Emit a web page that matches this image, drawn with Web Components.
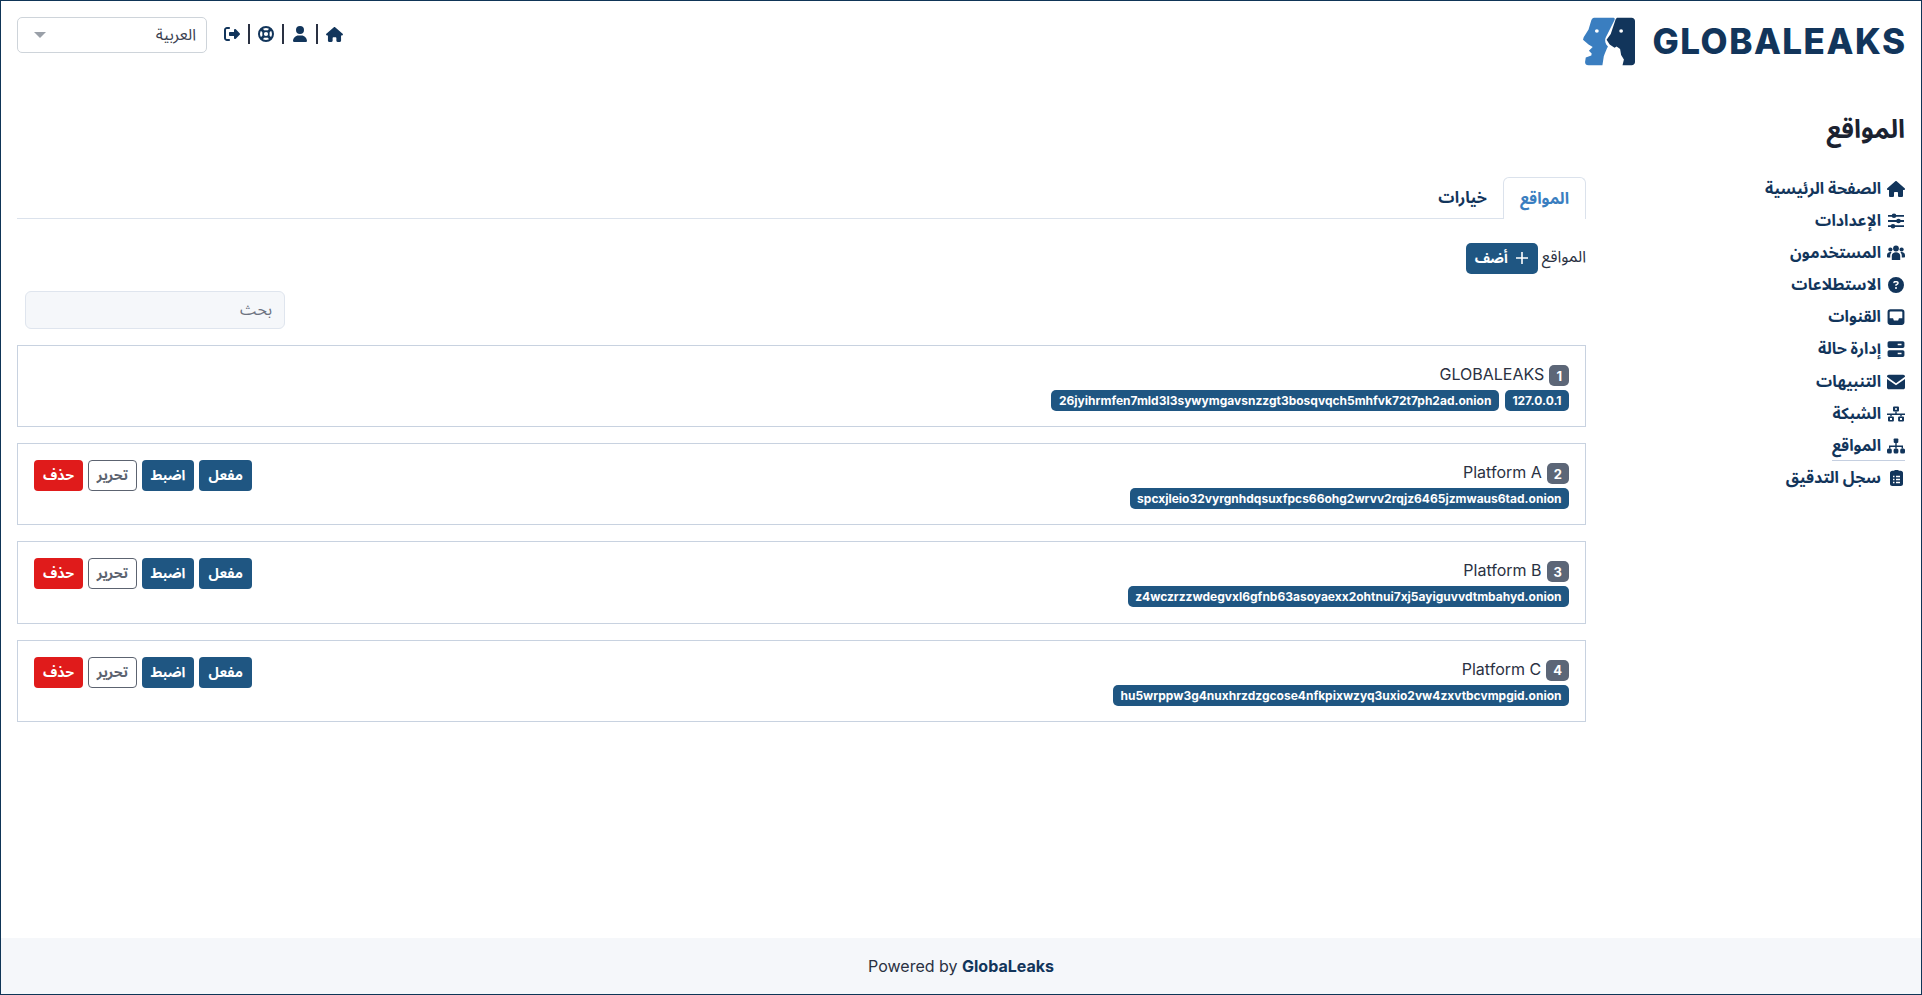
<!DOCTYPE html>
<html lang="ar" dir="rtl">
<head>
<meta charset="utf-8">
<title>GlobaLeaks</title>
<style>
html, body { margin: 0; height: 100%; overflow: hidden; background: #fff; }
body { font-family: Inter, "Noto Sans Arabic", "Noto Sans", sans-serif; color: #212529; font-size: 16px; }
</style>
</head>
<body>
<gl-app>
  <gl-topbar slot="top"></gl-topbar>
  <gl-sidebar slot="side">
    <gl-nav-item icon="house">الصفحة الرئيسية</gl-nav-item>
    <gl-nav-item icon="sliders">الإعدادات</gl-nav-item>
    <gl-nav-item icon="users">المستخدمون</gl-nav-item>
    <gl-nav-item icon="question">الاستطلاعات</gl-nav-item>
    <gl-nav-item icon="inbox">القنوات</gl-nav-item>
    <gl-nav-item icon="server">إدارة حالة</gl-nav-item>
    <gl-nav-item icon="envelope">التنبيهات</gl-nav-item>
    <gl-nav-item icon="network">الشبكة</gl-nav-item>
    <gl-nav-item icon="sitemap" active>المواقع</gl-nav-item>
    <gl-nav-item icon="clipboard">سجل التدقيق</gl-nav-item>
  </gl-sidebar>
  <gl-sites slot="main">
    <gl-site-card num="1" name="GLOBALEAKS" pills="127.0.0.1,26jyihrmfen7mld3l3sywymgavsnzzgt3bosqvqch5mhfvk72t7ph2ad.onion"></gl-site-card>
    <gl-site-card num="2" name="Platform A" pills="spcxjleio32vyrgnhdqsuxfpcs66ohg2wrvv2rqjz6465jzmwaus6tad.onion" actions></gl-site-card>
    <gl-site-card num="3" name="Platform B" pills="z4wczrzzwdegvxl6gfnb63asoyaexx2ohtnui7xj5ayiguvvdtmbahyd.onion" actions></gl-site-card>
    <gl-site-card num="4" name="Platform C" pills="hu5wrppw3g4nuxhrzdzgcose4nfkpixwzyq3uxio2vw4zxvtbcvmpgid.onion" actions></gl-site-card>
  </gl-sites>
  <gl-footer slot="foot"></gl-footer>
</gl-app>

<script>
const ICONS = {
  house: '<svg viewBox="0 0 576 512"><path d="M575.8 255.5c0 18-15 32.1-32 32.1h-32l.7 160.2c0 2.7-.2 5.4-.5 8.1V472c0 22.1-17.9 40-40 40H456c-1.1 0-2.2 0-3.3-.1c-1.4 .1-2.8 .1-4.2 .1H392c-22.1 0-40-17.9-40-40V384c0-17.7-14.3-32-32-32H256c-17.7 0-32 14.3-32 32v88c0 22.1-17.9 40-40 40H128.1c-1.5 0-3-.1-4.5-.2c-1.2 .1-2.4 .2-3.6 .2H104c-22.1 0-40-17.9-40-40V360c0-.9 0-1.9 .1-2.8V287.6H32c-18 0-32-14-32-32.1c0-9 3-17 10-24L266.4 8c7-7 15-8 22-8s15 2 21 7L564.8 231.5c8 7 12 15 11 24z"/></svg>',
  user: '<svg viewBox="0 0 448 512"><path d="M224 256A128 128 0 1 0 224 0a128 128 0 1 0 0 256zm-45.7 48C79.8 304 0 383.8 0 482.3C0 498.7 13.3 512 29.7 512H418.3c16.4 0 29.7-13.3 29.7-29.7C448 383.8 368.2 304 269.7 304H178.3z"/></svg>',
  logout: '<svg viewBox="0 0 512 512"><path d="M377.9 105.9L500.7 228.7c7.2 7.2 11.3 17.1 11.3 27.3s-4.1 20.1-11.3 27.3L377.9 406.1c-6.4 6.4-15 9.9-24 9.9c-18.7 0-33.9-15.2-33.9-33.9l0-62.1-128 0c-17.7 0-32-14.3-32-32l0-64c0-17.7 14.3-32 32-32l128 0 0-62.1c0-18.7 15.2-33.9 33.9-33.9c9 0 17.6 3.6 24 9.9zM160 96L96 96c-17.7 0-32 14.3-32 32l0 256c0 17.7 14.3 32 32 32l64 0c17.7 0 32 14.3 32 32s-14.3 32-32 32l-64 0c-53 0-96-43-96-96L0 128C0 75 43 32 96 32l64 0c17.7 0 32 14.3 32 32s-14.3 32-32 32z"/></svg>',
  lifering: '<svg viewBox="0 0 16 16"><circle cx="8" cy="8" r="7" fill="none" stroke="currentColor" stroke-width="2"/><circle cx="8" cy="8" r="2.900" fill="none" stroke="currentColor" stroke-width="1.600"/><path d="M3 3l2.800 2.800M13 3l-2.800 2.800M3 13l2.800-2.800M13 13l-2.800-2.800" stroke="currentColor" stroke-width="2.800"/></svg>',
  sliders: '<svg viewBox="0 0 16 16"><path d="M0 2.800h16M0 8h16M0 13.200h16" stroke="currentColor" stroke-width="1.800"/><circle cx="6" cy="2.800" r="2.300"/><circle cx="10.500" cy="8" r="2.300"/><circle cx="5" cy="13.200" r="2.300"/></svg>',
  users: '<svg viewBox="0 0 18 15"><circle cx="9" cy="3" r="2.900"/><circle cx="3.400" cy="4" r="2.100"/><circle cx="14.600" cy="4" r="2.100"/><path d="M4.800 14.500V10.500C4.800 8 6.600 6.800 9 6.800s4.200 1.200 4.200 3.700v4zM3.400 6.600c.5 0 .9.100 1.200.2C3.700 7.700 3.200 9 3.200 10.500V12H.8C.3 12 0 11.700 0 11.200V9.700C0 7.900 1.500 6.600 3.400 6.600zM14.600 6.600c-.5 0-.9.100-1.200.2.900.9 1.400 2.200 1.400 3.700V12h2.400c.5 0 .8-.3.8-.8V9.700c0-1.800-1.500-3.100-3.400-3.100z"/></svg>',
  question: '<svg viewBox="0 0 512 512"><path d="M256 512A256 256 0 1 0 256 0a256 256 0 1 0 0 512zM169.800 165.300c7.900-22.300 29.100-37.300 52.800-37.300h58.300c34.900 0 63.100 28.300 63.100 63.100c0 22.600-12.100 43.500-31.700 54.800L280 264.400c-.2 13-10.900 23.600-24 23.600c-13.300 0-24-10.700-24-24V250.500c0-8.600 4.600-16.500 12.100-20.800l44.300-25.400c4.700-2.700 7.600-7.700 7.600-13.100c0-8.400-6.800-15.100-15.100-15.100H222.600c-3.400 0-6.400 2.100-7.500 5.300l-.4 1.200c-4.400 12.500-18.200 19-30.600 14.600s-19-18.200-14.600-30.600l.4-1.200zM224 352a32 32 0 1 1 64 0 32 32 0 1 1 -64 0z"/></svg>',
  inbox: '<svg viewBox="0 0 16 14"><path fill-rule="evenodd" d="M3 0h10a2.500 2.500 0 0 1 2.500 2.500v9A2.500 2.500 0 0 1 13 14H3A2.500 2.500 0 0 1 .5 11.500v-9A2.500 2.500 0 0 1 3 0zM3 2a.6.6 0 0 0-.6.6V8h3l.7 2h3.800l.7-2h3V2.600A.6.6 0 0 0 13 2z"/></svg>',
  server: '<svg viewBox="0 0 16 14"><path fill-rule="evenodd" d="M2 0h12a1.500 1.500 0 0 1 1.500 1.500v3A1.500 1.500 0 0 1 14 6H2A1.500 1.500 0 0 1 .5 4.500v-3A1.500 1.500 0 0 1 2 0zM2 8h12a1.500 1.500 0 0 1 1.500 1.500v3A1.500 1.500 0 0 1 14 14H2a1.500 1.500 0 0 1-1.500-1.500v-3A1.500 1.500 0 0 1 2 8zM9.500 2.400v1.200h3.400V2.400zM9.500 10.400v1.200h3.400v-1.200z"/></svg>',
  envelope: '<svg viewBox="0 0 16 13"><path d="M1.600 0h12.800C15.300 0 16 .7 16 1.600v.3L8 7.500 0 1.900v-.3C0 .7.700 0 1.600 0zM0 3.800l8 5.600 8-5.600v7.600c0 .9-.7 1.600-1.600 1.600H1.600C.7 13 0 12.300 0 11.400z"/></svg>',
  network: '<svg viewBox="0 0 18 15"><path fill-rule="evenodd" d="M7 0h4a1 1 0 0 1 1 1v3a1 1 0 0 1-1 1H7a1 1 0 0 1-1-1V1a1 1 0 0 1 1-1zM8 1.700v1.600h2V1.700z"/><path d="M0 7h18v1.400H0zM8.300 5h1.400v3H8.300zM3.300 8h1.400v2H3.300zM13.300 8h1.400v2h-1.400z"/><path fill-rule="evenodd" d="M2 10h3.900a1 1 0 0 1 1 1v3a1 1 0 0 1-1 1H2a1 1 0 0 1-1-1v-3a1 1 0 0 1 1-1zM3 11.600v1.800h2v-1.800zM12.100 10H16a1 1 0 0 1 1 1v3a1 1 0 0 1-1 1h-3.900a1 1 0 0 1-1-1v-3a1 1 0 0 1 1-1zM13 11.600v1.800h2v-1.800z"/></svg>',
  sitemap: '<svg viewBox="0 0 18 15"><rect x="6.700" y="0" width="4.600" height="4.400" rx=".8"/><path d="M8.300 4h1.400v3H16v3h-1.400V8.400H9.700V10H8.300V8.400H3.400V10H2V7h6.300z"/><rect x="0" y="10" width="4.800" height="5" rx="1.600"/><rect x="6.600" y="10" width="4.800" height="5" rx="1.600"/><rect x="13.200" y="10" width="4.800" height="5" rx="1.600"/></svg>',
  clipboard: '<svg viewBox="0 0 13 16"><path fill-rule="evenodd" d="M4 .8C4.300.3 4.800 0 5.300 0h2.400c.5 0 1 .3 1.300.8h1.700c1.300 0 2.300 1 2.300 2.200v10.700c0 1.300-1 2.300-2.300 2.300H2.300C1 16 0 15 0 13.700V3C0 1.800 1 .8 2.300.8zM3 5.800v1.400h1.500V5.800zM6 5.800v1.400h4V5.800zM3 8.800v1.400h1.500V8.800zM6 8.800v1.400h4V8.800zM3 11.800v1.400h1.500v-1.400zM6 11.800v1.400h4v-1.400z"/></svg>'
};

class GlApp extends HTMLElement {
  constructor() {
    super();
    this.attachShadow({ mode: 'open' }).innerHTML = `
      <style>
        :host { display: flex; flex-direction: column; height: 100vh; box-sizing: border-box; border: 1px solid #0f3557; }
        .top { flex: none; }
        .body { flex: 1; display: flex; min-height: 0; padding: 0 16px; }
        .side { flex: none; width: 319px; }
        .main { flex: 1; min-width: 0; }
        .foot { flex: none; }
      </style>
      <div class="top"><slot name="top"></slot></div>
      <div class="body">
        <div class="side"><slot name="side"></slot></div>
        <div class="main"><slot name="main"></slot></div>
      </div>
      <div class="foot"><slot name="foot"></slot></div>`;
  }
}

class GlTopbar extends HTMLElement {
  constructor() {
    super();
    this.attachShadow({ mode: 'open' }).innerHTML = `
      <style>
        :host { display: flex; justify-content: space-between; align-items: flex-start; padding: 16px 16px 0; height: 94px; box-sizing: border-box; }
        .logo { display: flex; align-items: center; gap: 17px; direction: ltr; height: 49px; }
        .logo svg { width: 52px; height: 49px; display: block; }
        .word { font: 800 35px/49px Inter, sans-serif; color: #12355b; letter-spacing: 1.500px; margin-right: -1.500px; }
        .tools { display: flex; align-items: flex-start; gap: 9px; }
        .links { display: flex; height: 20px; margin-top: 7px; color: #12355b; }
        .links a { width: 32px; height: 20px; border-left: 2px solid #2a3142; display: flex; align-items: center; justify-content: center; }
        .links a:last-child { border-left: 0; }
        .links svg { display: block; fill: currentColor; }
        .select { width: 190px; height: 36px; box-sizing: border-box; border: 1px solid #ced4da; border-radius: 5px; display: flex; align-items: center; justify-content: space-between; padding: 0 10px 0 16px; font-size: 16px; color: #3b4150; background: #fff; }
        .caret { width: 0; height: 0; border-style: solid; border-width: 6px 6px 0; border-color: #9aa0a8 transparent transparent; }
      </style>
      <div class="logo" dir="ltr">
        <svg viewBox="0 0 150 150" preserveAspectRatio="none" aria-hidden="true">
          <path fill="#3a7ec0" d="M32 2H88C92 2 92 6 91 9L66 62C63 68 63 76 67 84L72 90C68 98 64 108 60 120L56 148H16C8 148 6 144 6 138L8 124 24 118 25 112 17 103 28 92 16 84 0 70 2 62 16 38 24 10C26 5 28 2 32 2Z"/>
          <path fill="#12355b" d="M100 2H140C146 2 150 6 150 12V138C150 144 146 148 140 148H114L118 130 110 116 107 98 97 90 91 94 77 84 68 70 80 52 94 8C96 4 97 2 100 2Z"/>
          <circle cx="40" cy="43" r="5.500" fill="#fff"/><circle cx="110" cy="43" r="5.500" fill="#fff"/>
        </svg>
        <span class="word">GLOBALEAKS</span>
      </div>
      <div class="tools">
        <div class="links" dir="rtl">
          <a>${ICONS.house.replace('<svg', '<svg height="15" width="17"')}</a>
          <a>${ICONS.user.replace('<svg', '<svg height="16" width="14"')}</a>
          <a>${ICONS.lifering.replace('<svg', '<svg height="16" width="16"')}</a>
          <a>${ICONS.logout.replace('<svg', '<svg height="16" width="16"')}</a>
        </div>
        <div class="select"><span>العربية</span><span class="caret"></span></div>
      </div>`;
  }
}

class GlSidebar extends HTMLElement {
  constructor() {
    super();
    this.attachShadow({ mode: 'open' }).innerHTML = `
      <style>
        :host { display: block; }
        h1 { margin: 0; padding-top: 16px; box-sizing: border-box; font-size: 25.600px; line-height: 36px; font-weight: 700; color: #1b2230; height: 80px; }
        nav { display: flex; flex-direction: column; align-items: flex-start; gap: 4.200px; }
      </style>
      <h1>المواقع</h1>
      <nav><slot></slot></nav>`;
  }
}

class GlNavItem extends HTMLElement {
  connectedCallback() {
    const active = this.hasAttribute('active');
    this.attachShadow({ mode: 'open' }).innerHTML = `
      <style>
        :host { display: block; }
        a { display: flex; align-items: center; gap: 6px; height: 28px; box-sizing: border-box; font-size: 16px; font-weight: 700; color: #12355b; white-space: nowrap; border-bottom: 1px solid ${active ? '#c5cfe0' : 'transparent'}; }
        i { width: 18px; display: flex; justify-content: center; }
        svg { display: block; height: 16px; max-width: 18px; fill: currentColor; }
      </style>
      <a><i>${ICONS[this.getAttribute('icon')]}</i><slot></slot></a>`;
  }
}

class GlSites extends HTMLElement {
  constructor() {
    super();
    this.attachShadow({ mode: 'open' }).innerHTML = `
      <style>
        :host { display: block; padding-top: 82px; box-sizing: border-box; }
        .tabs { display: flex; height: 42px; box-sizing: border-box; border-bottom: 1px solid #dbe2ec; font-size: 16px; font-weight: 700; }
        .tab { padding: 0 16px; display: flex; align-items: center; color: #12355b; height: 41px; }
        .tab.on { color: #3a7ec0; border: 1px solid #dbe2ec; border-bottom: 0; background: #fff; border-radius: 6px 6px 0 0; height: 42px; margin-bottom: -1px; box-sizing: border-box; }
        .head { display: flex; align-items: center; gap: 4px; margin-top: 23px; height: 32px; font-size: 16px; color: #2a3142; }
        .head > span:first-child { padding-bottom: 3px; }
        .add { display: flex; align-items: center; gap: 7px; height: 31px; width: 72px; box-sizing: border-box; justify-content: center; background: #1f5682; color: #fff; border-radius: 5px; font-weight: 700; font-size: 14px; }
        .add svg { width: 14px; height: 14px; display: block; }
        .wrap { display: flex; justify-content: flex-end; margin: 17px 0 16px; padding-left: 8px; }
        .box { width: 260px; height: 38px; box-sizing: border-box; border: 1px solid #dfe5ee; border-radius: 6px; background: #f5f7fa; color: #6c7280; font-size: 16px; display: flex; align-items: center; padding: 0 12px; }
        .list { display: flex; flex-direction: column; gap: 16px; }
      </style>
      <div class="tabs"><div class="tab on">المواقع</div><div class="tab">خيارات</div></div>
      <div class="head"><span>المواقع</span>
        <span class="add"><svg viewBox="0 0 14 14"><path d="M7 1v12M1 7h12" stroke="#fff" stroke-width="1.600"/></svg>أضف</span>
      </div>
      <div class="wrap"><div class="box">بحث</div></div>
      <div class="list"><slot></slot></div>`;
  }
}

class GlSiteCard extends HTMLElement {
  connectedCallback() {
    const pills = this.getAttribute('pills').split(',').map(p => `<span class="pill">${p}</span>`).join('');
    const actions = this.hasAttribute('actions') ? `
      <div class="actions">
        <span class="btn">مفعل</span><span class="btn">اضبط</span><span class="btn edit">تحرير</span><span class="btn del">حذف</span>
      </div>` : '';
    this.attachShadow({ mode: 'open' }).innerHTML = `
      <style>
        :host { display: block; }
        .card { display: flex; justify-content: space-between; align-items: flex-start; height: 82.200px; box-sizing: border-box; border: 1px solid #c8d2e0; padding: 16px; }
        .info { display: flex; flex-direction: column; gap: 4px; padding-top: 3px; }
        .name { display: flex; align-items: flex-start; gap: 5px; height: 21px; font-size: 16px; line-height: 18px; color: #2a3142; }
        .num { background: #5c6677; color: #fff; font-size: 13px; font-weight: 700; box-sizing: border-box; height: 21px; border-radius: 5px; display: flex; align-items: center; justify-content: center; padding: 0 7px; }
        .pills { display: flex; gap: 6px; }
        .pill { background: #1f5682; color: #fff; font: 700 12px/21px Inter, sans-serif; padding: 0 7.500px; border-radius: 5px; height: 21px; }
        .actions { display: flex; gap: 5px; }
        .btn { display: flex; align-items: center; justify-content: center; height: 31px; box-sizing: border-box; padding: 0 9px; border-radius: 4px; background: #1f5682; color: #fff; font-size: 14px; font-weight: 700; }
        .edit { background: #fff; color: #5c6370; border: 1px solid #5c6370; padding: 0 7.500px; }
        .del { background: #e01b1b; }
      </style>
      <div class="card">
        <div class="info">
          <div class="name"><span class="num">${this.getAttribute('num')}</span><span>${this.getAttribute('name')}</span></div>
          <div class="pills">${pills}</div>
        </div>
        ${actions}
      </div>`;
  }
}

class GlFooter extends HTMLElement {
  constructor() {
    super();
    this.attachShadow({ mode: 'open' }).innerHTML = `
      <style>
        :host { display: flex; justify-content: center; align-items: center; height: 56px; background: #f5f7fa; font-size: 16px; color: #2a3142; }
        b { color: #12355b; font-weight: 700; }
      </style>
      <div dir="ltr">Powered by <b>GlobaLeaks</b></div>`;
  }
}

customElements.define('gl-app', GlApp);
customElements.define('gl-topbar', GlTopbar);
customElements.define('gl-sidebar', GlSidebar);
customElements.define('gl-nav-item', GlNavItem);
customElements.define('gl-sites', GlSites);
customElements.define('gl-site-card', GlSiteCard);
customElements.define('gl-footer', GlFooter);
</script>
</body>
</html>
